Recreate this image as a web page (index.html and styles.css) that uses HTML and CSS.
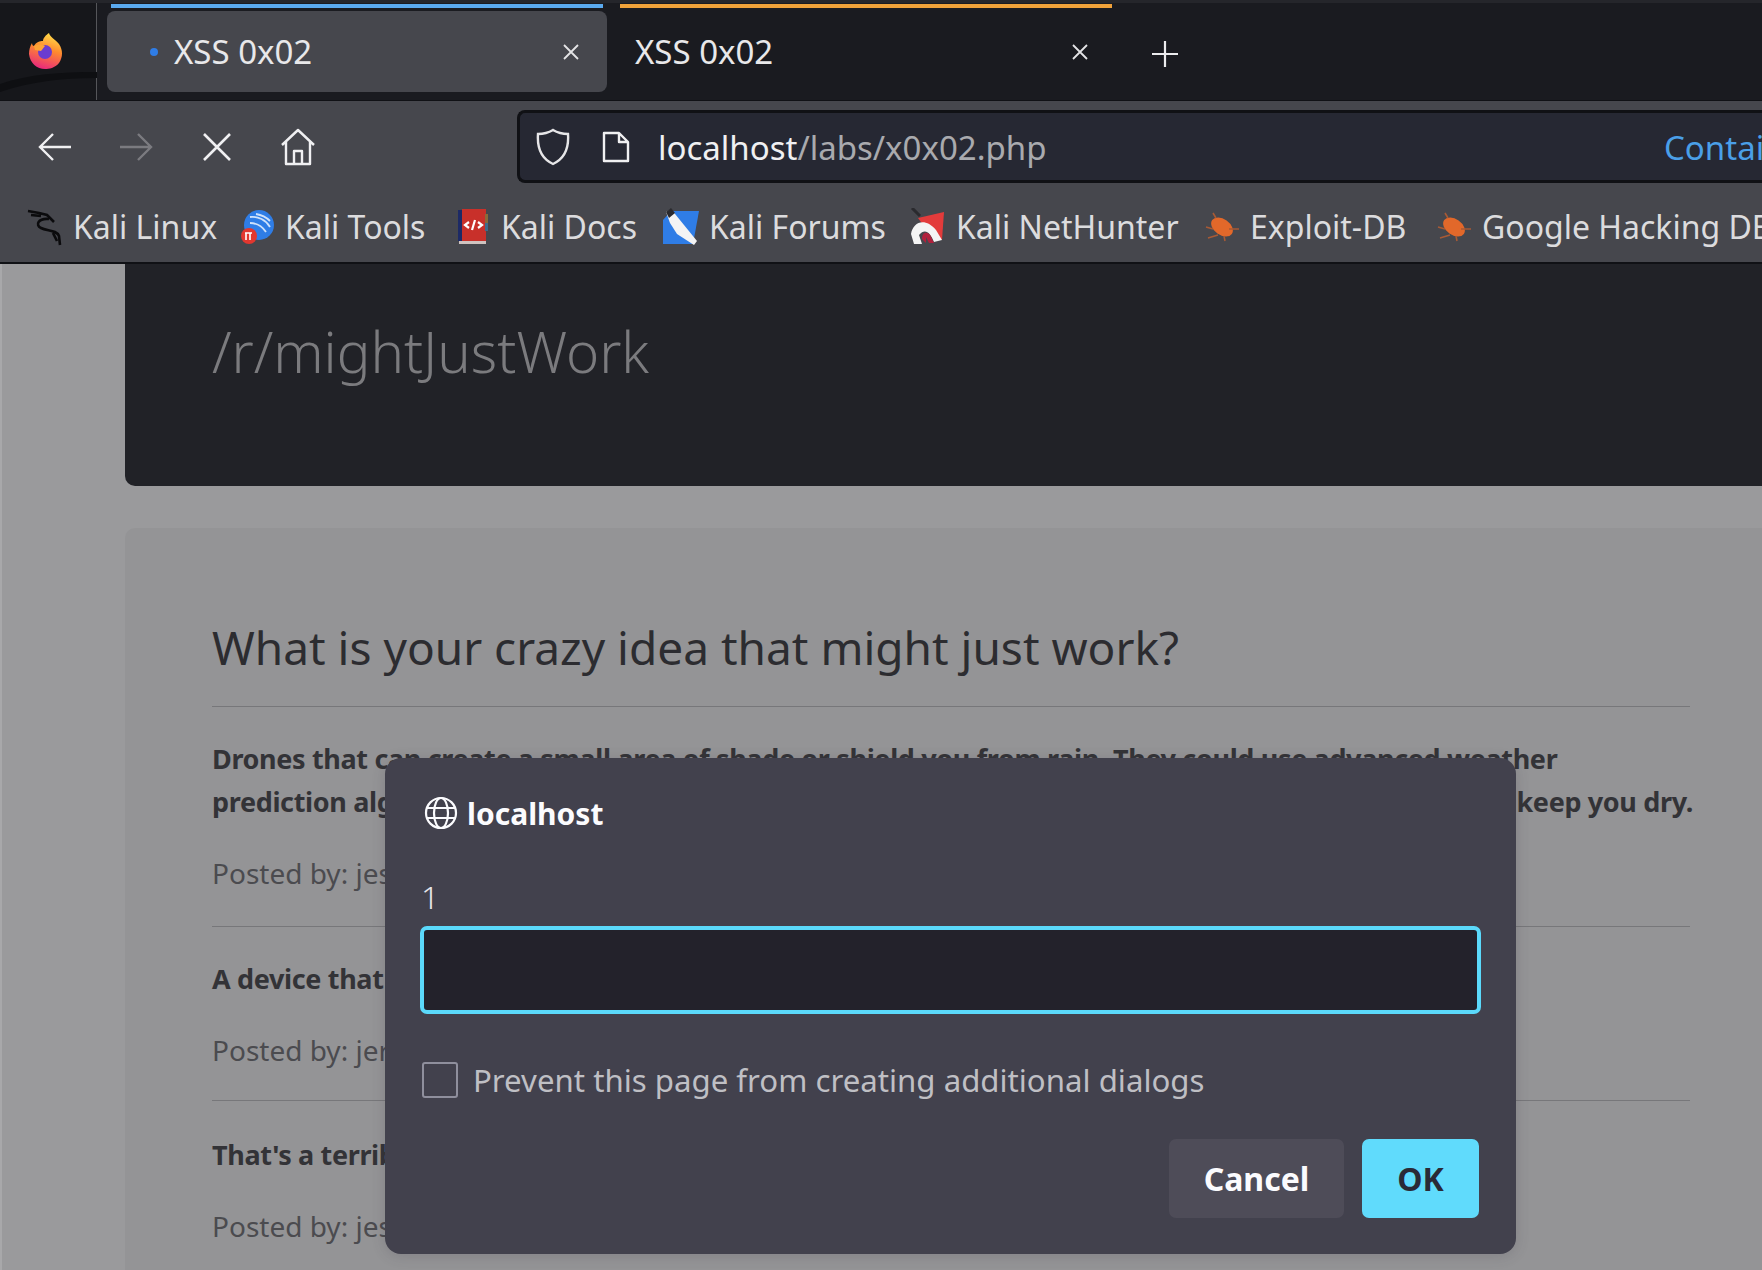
FILE: index.html
```html
<!DOCTYPE html>
<html lang="en">
<head>
  <meta charset="UTF-8">
  <title>XSS 0x02</title>
  <link rel="stylesheet" href="styles.css">
</head>
<body>
  <!-- Tab strip -->
  <div class="tabstrip">
    <div class="ff-button">
      <svg class="wallpaper" width="97" height="40" viewBox="0 0 97 40"><path d="M0 24 C30 14 60 12 97 12 L97 18 C60 18 30 22 0 32Z" fill="#0e0f12"/></svg>
      <svg class="ff-logo" width="36" height="38" viewBox="0 0 36 38">
        <defs>
          <linearGradient id="ffGrad" x1="0.7" y1="0" x2="0.4" y2="1">
            <stop offset="0" stop-color="#ffe14a"/>
            <stop offset="0.45" stop-color="#ff8a2e"/>
            <stop offset="1" stop-color="#e8297c"/>
          </linearGradient>
        </defs>
        <path d="M21 1 C22 5 27 7 31 12 C35 18 35 25 31 31 C27 36 21 37 17 37 C9 37 2 31 1 22 C1 18 2 14 4 11 C4 13 5 14 6 14 C8 10 12 9 15 9 C15 6 18 3 21 1Z" fill="url(#ffGrad)"/>
        <circle cx="17" cy="20" r="7" fill="#6a3ccf"/>
        <path d="M6 14 C9 12 14 12 17 14 L13 19 L7 18Z" fill="#ffa436"/>
      </svg>
    </div>
    <div class="tab tab-active">
      <div class="tab-line line-blue"></div>
      <div class="tab-body">
        <span class="tab-dot"></span>
        <span class="tab-title">XSS 0x02</span>
        <svg class="tab-close" width="20" height="20" viewBox="0 0 20 20"><path d="M3 3 L17 17 M17 3 L3 17" stroke="#e4e4e6" stroke-width="1.8" fill="none"/></svg>
      </div>
    </div>
    <div class="tab">
      <div class="tab-line line-orange"></div>
      <div class="tab-body">
        <span class="tab-title">XSS 0x02</span>
        <svg class="tab-close" width="20" height="20" viewBox="0 0 20 20"><path d="M3 3 L17 17 M17 3 L3 17" stroke="#e4e4e6" stroke-width="1.8" fill="none"/></svg>
      </div>
    </div>
    <svg class="new-tab" width="28" height="28" viewBox="0 0 28 28"><path d="M14 1 V27 M1 14 H27" stroke="#ececee" stroke-width="2.2" fill="none"/></svg>
  </div>

  <!-- Navigation bar -->
  <div class="navbar">
    <div class="nav-buttons">
      <svg width="36" height="34" viewBox="0 0 36 34"><path d="M34 17 H3 M16 4 L3 17 L16 30" stroke="#f0f0f2" stroke-width="2.4" fill="none"/></svg>
      <svg width="36" height="34" viewBox="0 0 36 34"><path d="M2 17 H33 M20 4 L33 17 L20 30" stroke="#7b7b80" stroke-width="2.4" fill="none"/></svg>
      <svg width="36" height="36" viewBox="-3 -3 36 36"><path d="M2 2 L28 28 M28 2 L2 28" stroke="#f0f0f2" stroke-width="2.6" fill="none"/></svg>
      <svg width="36" height="38" viewBox="0 0 36 38"><path d="M2 17 L18 2 L34 17 M6 14 V36 H30 V14 M14 36 V23 H22 V36" stroke="#f0f0f2" stroke-width="2.4" fill="none" stroke-linejoin="round"/></svg>
    </div>
    <div class="urlbar">
      <svg class="url-shield" width="34" height="38" viewBox="0 0 34 38"><path d="M17 2 C22 5 27 6 32 6 C33 20 28 31 17 36 C6 31 1 20 2 6 C7 6 12 5 17 2Z" stroke="#e6e6e8" stroke-width="2.4" fill="none"/></svg>
      <svg class="url-page" width="28" height="32" viewBox="0 0 28 32"><path d="M2 2 H17 L26 11 V30 H2Z M17 2 V11 H26" stroke="#f0f0f2" stroke-width="2.4" fill="none" stroke-linejoin="round"/></svg>
      <span class="url-text"><span class="url-host">localhost</span>/labs/x0x02.php</span>
      <span class="url-container">Container</span>
    </div>
  </div>

  <!-- Bookmarks toolbar -->
  <div class="bookmarks">
    <a class="bookmark bm-linux">
      <svg width="36" height="38" viewBox="0 0 36 38"><g stroke="#0b0b0d" stroke-width="2.6" fill="none"><path d="M1 3 L12 5 L20 7 L27 14 M4 7 L14 8"/><path d="M22 11 C11 10 8 17 14 20 C20 23 30 22 32 28 L33 37"/><path d="M26 25 L30 33"/></g></svg>
      <span>Kali Linux</span>
    </a>
    <a class="bookmark bm-tools">
      <svg width="34" height="36" viewBox="0 0 34 36"><circle cx="19" cy="16" r="15" fill="#2f7de6"/><path d="M10 8 C18 7 26 11 30 18 M10 14 C16 14 22 17 26 23 M16 5 C22 6 27 9 30 12" stroke="#cfe2fb" stroke-width="1.8" fill="none"/><circle cx="9" cy="27" r="8" fill="#e2372f"/><path d="M6 24 V31 M10 24 V31 M5 24 H12" stroke="#fff" stroke-width="1.6"/></svg>
      <span>Kali Tools</span>
    </a>
    <a class="bookmark bm-docs">
      <svg width="30" height="36" viewBox="0 0 30 36"><rect x="0" y="1" width="5" height="31" fill="#1d2a66"/><rect x="4" y="0" width="24" height="32" fill="#c8302a"/><rect x="27" y="5" width="3" height="9" fill="#8a6a3a"/><rect x="27" y="14" width="3" height="8" fill="#3f6a8a"/><rect x="1" y="32" width="27" height="3" fill="#cfc3c0"/><path d="M11 13 L7 16 L11 19 M20 13 L24 16 L20 19 M17 11 L14 21" stroke="#fff" stroke-width="2.2" fill="none"/></svg>
      <span>Kali Docs</span>
    </a>
    <a class="bookmark bm-forums">
      <svg width="36" height="38" viewBox="0 0 36 38"><path d="M0 12 L8 3 H36 L30 36 H0Z" fill="#2f7de6"/><path d="M3 4 L8 1 L34 33 L31 37 L14 26 L7 15Z" fill="#f4f4f4"/><path d="M3 4 L8 0 L12 5 L6 10Z" fill="#2a2a2e"/></svg>
      <span>Kali Forums</span>
    </a>
    <a class="bookmark bm-hunter">
      <svg width="36" height="38" viewBox="0 0 36 38"><path d="M8 10 L34 4 L32 32 L24 32Z" fill="#e33b3b"/><path d="M1 26 C3 14 15 9 26 22 L32 32 L24 34 C20 24 15 20 9 27 L12 36 L4 36Z" fill="#f4f4f4"/><path d="M12 31 C12 24 17 23 20 27 L24 35 L19 35 L16 29 L16 35 Z" fill="#b1203c"/><path d="M2 0 L10 8" stroke="#2a2a2e" stroke-width="3"/></svg>
      <span>Kali NetHunter</span>
    </a>
    <a class="bookmark bm-exploit">
      <svg width="34" height="30" viewBox="0 0 34 30"><ellipse cx="17" cy="15" rx="12" ry="8" transform="rotate(35 17 15)" fill="#e2682a"/><path d="M1 15 L8 17 M3 26 L13 23 M24 17 L34 17 M8 1 L11 6 M20 29 L19 24" stroke="#a85a35" stroke-width="1.6"/></svg>
      <span>Exploit-DB</span>
    </a>
    <a class="bookmark bm-ghdb">
      <svg width="34" height="30" viewBox="0 0 34 30"><ellipse cx="17" cy="15" rx="12" ry="8" transform="rotate(35 17 15)" fill="#e2682a"/><path d="M1 15 L8 17 M3 26 L13 23 M24 17 L34 17 M8 1 L11 6 M20 29 L19 24" stroke="#a85a35" stroke-width="1.6"/></svg>
      <span>Google Hacking DB</span>
    </a>
  </div>

  <!-- Page content, dimmed by the dialog -->
  <div class="page">
    <header class="site-header">/r/mightJustWork</header>
    <main class="card">
      <h1>What is your crazy idea that might just work?</h1>
      <div class="post post-first">
        <p class="post-text">Drones that can create a small area of shade or shield you from rain. They could use advanced weather<br>prediction algorithms to follow you around on a stroll and hover directly above your head all day to keep you dry.</p>
        <p class="post-by">Posted by: jessica</p>
      </div>
      <div class="post">
        <p class="post-text">A device that translates what your pet is thinking.</p>
        <p class="post-by">Posted by: jeremy</p>
      </div>
      <div class="post post-last">
        <p class="post-text">That's a terrible idea, but I would buy it.</p>
        <p class="post-by">Posted by: jessica</p>
      </div>
    </main>
  </div>

  <!-- Prompt dialog -->
  <div class="dialog">
    <div class="dialog-title">
      <svg width="34" height="34" viewBox="0 0 34 34"><g stroke="#fbfbfe" stroke-width="2.2" fill="none"><circle cx="17" cy="17" r="15"/><ellipse cx="17" cy="17" rx="7" ry="15"/><path d="M3 12 H31 M3 22 H31"/></g></svg>
      <span>localhost</span>
    </div>
    <div class="dialog-msg">1</div>
    <div class="dialog-input"></div>
    <div class="dialog-check">
      <span class="checkbox"></span>
      <span>Prevent this page from creating additional dialogs</span>
    </div>
    <div class="dialog-buttons">
      <button class="btn btn-cancel">Cancel</button>
      <button class="btn btn-ok">OK</button>
    </div>
  </div>
</body>
</html>
```

FILE: styles.css
```css
/* Reset */
html, body, h1, p {
  margin: 0;
  padding: 0;
}

body {
  width: 1762px;
  height: 1270px;
  overflow: hidden;
  position: relative;
  background-color: #9a9a9c;
  font-family: "Noto Sans", sans-serif;
  color: #e8e8ea;
}

svg {
  flex: none;
}

/* Tab strip */
.tabstrip {
  height: 100px;
  display: flex;
  background-color: #1a1b20;
  border-top: 3px solid #25262b;
  box-sizing: border-box;
}

.ff-button {
  width: 97px;
  height: 97px;
  flex: none;
  display: flex;
  align-items: center;
  justify-content: center;
  padding-bottom: 2px;
  box-sizing: border-box;
  border-right: 1px solid #55565a;
  position: relative;
  background-color: #16171b;
}

.wallpaper {
  position: absolute;
  left: 0;
  bottom: 0;
}

.ff-logo {
  margin-left: -5px;
  position: relative;
}

.tab {
  width: 500px;
  margin-left: 10px;
  flex: none;
}

.tab + .tab {
  margin-left: 9px;
}

.tab-line {
  height: 4px;
  margin: 1px 4px 3px;
}

.line-blue {
  background-color: #5aa9ee;
}

.line-orange {
  background-color: #f0a23a;
}

.tab-body {
  height: 81px;
  display: flex;
  align-items: center;
  padding: 0 26px 0 19px;
  box-sizing: border-box;
  border-radius: 8px;
}

.tab-active .tab-body {
  background-color: #46474d;
  padding: 0 26px 0 42px;
  position: relative;
}

.tab-dot {
  position: absolute;
  left: 43px;
  top: 37px;
  width: 8px;
  height: 8px;
  border-radius: 50%;
  background-color: #2f7de6;
}

.tab-active .tab-title {
  margin-left: 25px;
}

.tab-title {
  font-size: 33px;
  flex: 1;
}

.new-tab {
  margin: 37px 0 0 35px;
}

/* Navigation bar */
.navbar {
  height: 83px;
  display: flex;
  background-color: #46474d;
  border-top: 1px solid #101115;
  box-sizing: border-box;
  padding-top: 9px;
}

.nav-buttons {
  width: 517px;
  flex: none;
  display: flex;
  align-items: center;
  gap: 45px;
  padding-left: 37px;
  box-sizing: border-box;
}

.urlbar {
  flex: 1;
  min-width: 0;
  height: 73px;
  display: flex;
  align-items: center;
  background-color: #262833;
  border: 3px solid #101115;
  border-right: none;
  border-radius: 8px 0 0 8px;
  box-sizing: border-box;
  overflow: hidden;
  white-space: nowrap;
  font-size: 33px;
  padding-left: 16px;
}

.url-page {
  margin-left: 32px;
}

.url-text {
  margin-left: 28px;
  color: #a9aaae;
  width: 1006px;
  flex: none;
  padding-top: 2px;
}

.url-host {
  color: #f0f0f2;
}

.url-container {
  color: #4a9fe8;
  padding-top: 2px;
}

/* Bookmarks */
.bookmarks {
  height: 81px;
  display: flex;
  align-items: center;
  background-color: #46474d;
  border-bottom: 2px solid #101115;
  box-sizing: border-box;
  padding: 8px 0 0 27px;
  white-space: nowrap;
  overflow: hidden;
  font-size: 32px;
  color: #dcdcde;
}

.bookmark {
  display: grid;
  grid-template-columns: 36px 1fr;
  column-gap: 10px;
  align-items: center;
  justify-items: start;
  flex: none;
}

.bookmark svg {
  justify-self: center;
}

.bm-linux { width: 212px; }
.bm-tools { width: 216px; }
.bm-docs { width: 208px; }
.bm-forums { width: 247px; }
.bm-hunter { width: 294px; }
.bm-exploit { width: 232px; }

/* Page */
.page {
  padding-left: 125px;
  box-shadow: inset 2px 0 0 #a8a8aa;
}

.site-header {
  height: 222px;
  background-color: #212227;
  border-radius: 0 0 0 10px;
  box-sizing: border-box;
  padding: 49px 0 0 87px;
  font-size: 56.3px;
  font-weight: 300;
  color: #7b7b7e;
}

.card {
  margin-top: 42px;
  background-color: #949496;
  border-radius: 10px 0 0 0;
  padding: 88px 72px 0 87px;
  height: 800px;
  box-sizing: border-box;
}

.card h1 {
  font-size: 46px;
  font-weight: 400;
  color: #2c2c30;
  line-height: 62px;
  padding-bottom: 28px;
  border-bottom: 1px solid #77777a;
}

.post {
  padding-top: 30px;
  border-bottom: 1px solid #77777a;
  height: 174px;
  box-sizing: border-box;
}

.post-first {
  height: 220px;
}

.post-last {
  padding-top: 32px;
  border-bottom: none;
}

.post-text {
  font-size: 27px;
  font-weight: 700;
  line-height: 43px;
  letter-spacing: -0.35px;
  white-space: nowrap;
  color: #333337;
}

.post-by {
  font-size: 28px;
  line-height: 43px;
  margin-top: 29px;
  color: #4b4b4f;
}

/* Dialog sits over the page */
.dialog {
  position: absolute;
  left: 385px;
  top: 758px;
  width: 1131px;
  height: 496px;
  box-sizing: border-box;
  padding: 38px 35px 0 35px;
  background-color: #42414d;
  border-radius: 16px;
  box-shadow: 0 2px 14px rgba(58, 57, 68, 0.2);
}

.dialog-title {
  display: flex;
  align-items: center;
  gap: 9px;
  padding-left: 4px;
  height: 34px;
  font-size: 30px;
  font-weight: 700;
  color: #fbfbfe;
}

.dialog-msg {
  padding-left: 1px;
  margin-top: 45px;
  font-size: 32px;
  font-weight: 300;
  line-height: 44px;
  height: 51px;
  color: #e6e6ea;
}

.dialog-input {
  height: 88px;
  box-sizing: border-box;
  background-color: #23222b;
  border: 4px solid #5bd9fb;
  border-radius: 7px;
}

.dialog-check {
  display: flex;
  align-items: center;
  gap: 15px;
  margin-top: 45px;
  padding-left: 2px;
  font-size: 31.2px;
  color: #bfbfc4;
}

.checkbox {
  width: 36px;
  height: 36px;
  box-sizing: border-box;
  border: 2px solid #8f8f9d;
  border-radius: 3px;
}

.dialog-buttons {
  display: flex;
  justify-content: flex-end;
  gap: 18px;
  margin-top: 38px;
  padding-right: 2px;
}

.btn {
  height: 79px;
  border: none;
  border-radius: 7px;
  font-family: inherit;
  font-size: 32px;
  font-weight: 700;
}

.btn-cancel {
  width: 175px;
  background-color: #4e4c58;
  color: #fbfbfe;
}

.btn-ok {
  width: 117px;
  background-color: #60dbfc;
  color: #2a2a36;
}
```
